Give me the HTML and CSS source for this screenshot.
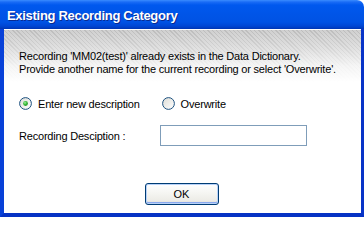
FILE: index.html
```html
<!DOCTYPE html>
<html>
<head>
<meta charset="utf-8">
<link rel="stylesheet" href="styles.css">
</head>
<body>
<div class="window">
  <div class="titlebar"><span class="title">Existing Recording Category</span></div>
  <div class="frame">
    <div class="content">
      <p class="msg">Recording 'MM02(test)' already exists in the Data Dictionary.<br>Provide another name for the current recording or select 'Overwrite'.</p>
      <div class="radios">
        <label class="radio">
          <svg class="radio-icon" width="13" height="13" viewBox="0 0 13 13">
            <defs>
              <linearGradient id="rf1" x1="0" y1="0" x2="1" y2="1">
                <stop offset="0" stop-color="#dcdcd6"/>
                <stop offset="1" stop-color="#ffffff"/>
              </linearGradient>
              <radialGradient id="dot" cx="0.4" cy="0.35" r="0.7">
                <stop offset="0" stop-color="#a0f0a0"/>
                <stop offset="0.5" stop-color="#3cbc3c"/>
                <stop offset="1" stop-color="#1a8c1a"/>
              </radialGradient>
            </defs>
            <circle cx="6.5" cy="6.5" r="5.9" fill="url(#rf1)" stroke="#1c5180" stroke-width="1"/>
            <circle cx="6.5" cy="6.5" r="2.4" fill="url(#dot)"/>
          </svg>
          <span>Enter new description</span>
        </label>
        <label class="radio">
          <svg class="radio-icon" width="13" height="13" viewBox="0 0 13 13">
            <defs>
              <linearGradient id="rf2" x1="0" y1="0" x2="1" y2="1">
                <stop offset="0" stop-color="#dcdcd6"/>
                <stop offset="1" stop-color="#ffffff"/>
              </linearGradient>
            </defs>
            <circle cx="6.5" cy="6.5" r="5.9" fill="url(#rf2)" stroke="#1c5180" stroke-width="1"/>
          </svg>
          <span>Overwrite</span>
        </label>
      </div>
      <div class="field">
        <span class="field-label">Recording Desciption :</span>
        <div class="textbox"></div>
      </div>
      <div class="actions">
        <button class="btn">OK</button>
      </div>
    </div>
  </div>
</div>
</body>
</html>
```
FILE: styles.css
```css
html, body {
  margin: 0;
  padding: 0;
  background: #ffffff;
}
.window {
  width: 364px;
  height: 217px;
  display: flex;
  flex-direction: column;
  font-family: "Liberation Sans", Arial, sans-serif;
  font-size: 11px;
  letter-spacing: -0.2px;
  color: #000;
  overflow: hidden;
}
.titlebar {
  height: 29px;
  flex: none;
  box-sizing: border-box;
  border-top-right-radius: 7px;
  background: linear-gradient(to bottom,
    #3a8cff 0px, #1a6cf6 2px, #0058ee 5px, #0055e8 14px,
    #0052e4 22px, #0046d4 26px, #003bc0 28px, #0034b0 29px);
  display: flex;
  align-items: center;
  padding: 0 0 0 7px;
}
.title {
  color: #fff;
  font-family: "Liberation Sans", Arial, sans-serif;
  font-weight: bold;
  font-size: 13px;
  text-shadow: 1px 1px 0 #0a2a90;
  letter-spacing: -0.3px;
  margin-top: 1px;
}
.frame {
  flex: 1;
  display: flex;
  box-sizing: border-box;
  border-left: 4px solid #0841d8;
  border-right: 3px solid #0834c8;
  border-bottom: 4px solid #0632c4;
  box-shadow: inset 1px 0 0 #ffffff;
}
.content {
  flex: 1;
  display: flex;
  flex-direction: column;
  border-top: 1px solid #ffffff;
  padding: 0 0 0 15px;
  background:
    linear-gradient(to bottom, rgba(255,255,255,0) 0px, rgba(255,255,255,0.35) 18px, rgba(255,255,255,0.8) 36px, #ffffff 52px),
    repeating-linear-gradient(45deg, #bcbcbc 0px, #bcbcbc 1px, #d0d0d0 1px, #d0d0d0 3px);
  background-repeat: no-repeat;
  background-size: 100% 100%, 100% 56px;
}
.msg {
  margin: 20px 0 0 0;
  line-height: 13px;
}
.radios {
  display: flex;
  align-items: center;
  margin-top: 21px;
  gap: 22px;
}
.radio {
  display: flex;
  align-items: center;
  gap: 6px;
}
.radio-icon {
  display: block;
  flex: none;
}
.field {
  display: flex;
  align-items: center;
  margin-top: 15px;
}
.field-label {
  width: 141px;
}
.textbox {
  width: 145px;
  height: 19px;
  border: 1px solid #7f9db9;
  background: #fff;
}
.actions {
  display: flex;
  justify-content: center;
  margin-top: 37px;
  padding-right: 15px;
}
.btn {
  width: 74px;
  height: 22px;
  margin-left: -2px;
  font-family: "Liberation Sans", Arial, sans-serif;
  font-size: 11px;
  color: #000;
  border: 1px solid #003c74;
  border-radius: 3px;
  background: linear-gradient(to bottom, #ffffff 0%, #f4f4f0 50%, #ecebe6 85%, #d6d0c5 100%);
  box-shadow: inset 0 0 0 1px #b8d2f8, inset 0 -1px 0 1px #8aa8ee;
  padding: 0;
}
```
